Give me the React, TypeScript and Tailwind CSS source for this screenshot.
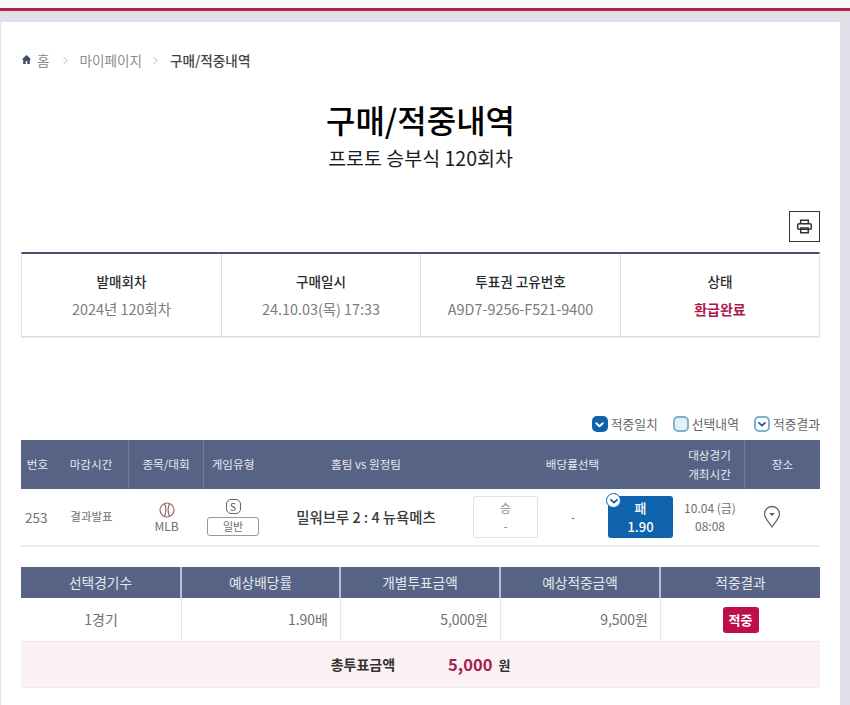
import React from "react";

const Check = ({ className = "" }: { className?: string }) => (
  <svg viewBox="0 0 12 12" className={className} fill="none">
    <path d="M3 4.8 6 7.6 9 4.8" stroke="currentColor" strokeWidth="1.8" strokeLinecap="round" strokeLinejoin="round" />
  </svg>
);

const Info = ({ label, value, strong }: { label: string; value: string; strong?: boolean }) => (
  <div className="flex flex-col items-center border-r border-[#dcdde3] last:border-r-0 pt-[16px]">
    <div className="text-[13.6px] leading-[22px] font-medium text-[#2b2b2b]">{label}</div>
    <div className={strong ? "mt-[6px] text-[14px] leading-[22px] font-bold text-[#ad1a4e]" : "mt-[6px] text-[14.4px] leading-[22px] text-[#7b7b7b]"}>{value}</div>
  </div>
);

const Th = ({ children, sep = false }: { children: React.ReactNode; sep?: boolean }) => (
  <div className={sep ? "flex items-center justify-center border-r border-[#6f7b9c] text-center" : "flex items-center justify-center text-center"}>{children}</div>
);

const Chevron = ({ className = "" }: { className?: string }) => (
  <svg viewBox="0 0 6 10" className={`w-[5px] h-[9px] ${className}`} fill="none">
    <path d="M1 1 5 5 1 9" stroke="#a5a5a5" strokeWidth="1" />
  </svg>
);

export default function App() {
  return (
    <div className="w-[850px] h-[705px] overflow-hidden bg-white text-[#333] font-['Noto_Sans_CJK_KR','Noto_Sans',sans-serif]">
      <div className="h-[8px] bg-[#fafafa]" />
      <div className="h-[3px] bg-[#b5204c]" />
      <div className="h-[694px] bg-[#dfe0e8] pt-[11px] pl-[1px] pr-[10px]">
        <div className="h-[683px] bg-white px-[20px]">
          <nav className="h-[74px] pt-[2px] flex items-center gap-[12px] text-[13.6px] text-[#8d8d8d]">
            <span className="flex items-center gap-[5px]">
              <svg viewBox="0 0 12 12" className="w-[11px] h-[11px]"><path d="M6 1 .8 6h1.6v5h2.7V7.6h1.8V11h2.7V6h1.6z" fill="#3f4b63" /></svg>
              홈
            </span>
            <Chevron className="ml-[1px]" />
            <span>마이페이지</span>
            <Chevron className="-ml-[1px]" />
            <span className="font-medium text-[#444]">구매/적중내역</span>
          </nav>

          <h1 className="mt-[1px] text-center text-[32px] leading-[44px] font-medium text-black">구매/적중내역</h1>
          <p className="mt-[4px] text-center text-[19.5px] leading-[26px] text-[#1c1c1c]">프로토 승부식 120회차</p>

          <div className="mt-[40px] flex justify-end">
            <button className="w-[31px] h-[31px] border border-[#333] flex items-center justify-center">
              <svg viewBox="0 0 18 18" className="w-[17px] h-[17px]" fill="none" stroke="#333" strokeWidth="1.6">
                <path d="M5 6V2.5h8V6" />
                <rect x="1.8" y="6" width="14.4" height="6" rx="1.5" />
                <path d="M5 10.5h8V15.5H5z" />
              </svg>
            </button>
          </div>

          <div className="mt-[10px] h-[85px] grid grid-cols-[200px_199px_200px_1fr] border-t-2 border-[#46536b] border-x border-b border-x-[#e3e4e9] border-b-[#dcdde3] shadow-[0_1px_2px_rgba(0,0,0,0.08)]">
            <Info label="발매회차" value="2024년 120회차" />
            <Info label="구매일시" value="24.10.03(목) 17:33" />
            <Info label="투표권 고유번호" value="A9D7-9256-F521-9400" />
            <Info label="상태" value="환급완료" strong />
          </div>

          <div className="mt-[77px] h-[20px] flex items-center justify-end gap-[15px] text-[12.8px] text-[#666]">
            <span className="flex items-center gap-[3px]">
              <span className="w-[16px] h-[16px] rounded-[5px] bg-[#0f62ac] text-white flex items-center justify-center"><Check className="w-[13px] h-[13px]" /></span>
              적중일치
            </span>
            <span className="flex items-center gap-[3px]">
              <span className="w-[16px] h-[16px] rounded-[5px] border-2 border-[#7fb0cf] bg-[#e6f0f8]" />
              선택내역
            </span>
            <span className="flex items-center gap-[3px]">
              <span className="w-[16px] h-[16px] rounded-[5px] border-2 border-[#7fb0cf] text-[#1b5f9b] flex items-center justify-center"><Check className="w-[12px] h-[12px]" /></span>
              적중결과
            </span>
          </div>

          <div className="mt-[6px] h-[49px] grid grid-cols-[33px_75px_75px_58px_208px_205px_70px_75px] bg-[#566384] text-[11.6px] leading-[19px] text-[#e6e8ef]">
            <Th>번호</Th>
            <Th sep>마감시간</Th>
            <Th sep>종목/대회</Th>
            <Th>게임유형</Th>
            <Th>홈팀 vs 원정팀</Th>
            <Th>배당률선택</Th>
            <Th sep><span>대상경기<br />개최시간</span></Th>
            <Th>장소</Th>
          </div>

          <div className="h-[58px] grid grid-cols-[33px_75px_75px_58px_208px_205px_70px_75px] items-center border-b-2 border-[#eeeef1] text-[#6f6f6f]">
            <div className="pl-[4px] text-[13.5px]">253</div>
            <div className="text-center text-[11.5px]">결과발표</div>
            <div className="flex flex-col items-center text-[12px] leading-[16px] pt-[2px]">
              <svg viewBox="0 0 16 16" className="w-[16px] h-[16px]" fill="none" stroke="#9a6a6a" strokeWidth="1.2">
                <circle cx="8" cy="8" r="7" />
                <path d="M5.5 1.8c1.6 3.6 1.6 8.8 0 12.4M10.5 1.8c-1.6 3.6-1.6 8.8 0 12.4" />
              </svg>
              MLB
            </div>
            <div className="flex flex-col items-center">
              <span className="w-[15px] h-[15px] rounded-[5px] border border-[#666] text-[10px] leading-[13px] text-center text-[#555]">S</span>
              <span className="mt-[3px] w-[52px] h-[19px] rounded-[3px] border border-[#999] text-[11px] leading-[17px] text-center">일반</span>
            </div>
            <div className="text-center text-[14.4px] font-medium text-[#3a3a3a]">밀워브루 2 : 4 뉴욕메츠</div>
            <div className="flex items-center pl-[3px]">
              <div className="w-[65px] h-[42px] border border-[#e3e3e6] rounded-[3px] flex flex-col items-center justify-center text-[12px] leading-[18px] text-[#888]">
                <span>승</span><span>-</span>
              </div>
              <div className="w-[70px] text-center text-[12px]">-</div>
              <div className="relative w-[65px] h-[42px] rounded-[3px] bg-[#0f62ac] flex flex-col items-center justify-center text-[13px] leading-[19px] font-medium text-white">
                <span>패</span><span>1.90</span>
                <span className="absolute -left-[2px] -top-[3px] w-[15px] h-[15px] rounded-full bg-white border border-[#0f62ac] text-[#0f62ac] flex items-center justify-center"><Check className="w-[12px] h-[12px]" /></span>
              </div>
            </div>
            <div className="text-center text-[12px] leading-[18px]">10.04 (금)<br />08:08</div>
            <div className="pl-[18px]">
              <svg viewBox="0 0 18 24" className="w-[18px] h-[24px]" fill="none">
                <path d="M9 22C5 16 1.5 13 1.5 9a7.5 7.5 0 0 1 15 0c0 4-3.5 7-7.5 13z" stroke="#6b6b6b" strokeWidth="1.3" />
                <path d="M6.2 8h5.6L9 11z" fill="#555" />
              </svg>
            </div>
          </div>

          <div className="mt-[20px] h-[31px] grid grid-cols-[161px_159px_160px_160px_1fr] bg-[#566384] text-[13.7px] text-[#e6e8ef]">
            {["선택경기수", "예상배당률", "개별투표금액", "예상적중금액", "적중결과"].map((t, i) => (
              <div key={t} className={i < 4 ? "flex items-center justify-center border-r-2 border-[#b9c0d2]" : "flex items-center justify-center"}>{t}</div>
            ))}
          </div>
          <div className="h-[44px] grid grid-cols-[161px_159px_160px_160px_1fr] text-[14px] text-[#6f6f6f] border-b border-[#e9e9ec]">
            <div className="flex items-center justify-center border-r border-[#e4e5ea]">1경기</div>
            <div className="flex items-center justify-end pr-[12px] border-r border-[#e4e5ea]">1.90배</div>
            <div className="flex items-center justify-end pr-[12px] border-r border-[#e4e5ea]">5,000원</div>
            <div className="flex items-center justify-end pr-[12px] border-r border-[#e4e5ea]">9,500원</div>
            <div className="flex items-center justify-center">
              <span className="w-[36px] h-[26px] rounded-[3px] bg-[#bf0f48] text-white text-[13px] font-bold flex items-center justify-center">적중</span>
            </div>
          </div>
          <div className="h-[46px] flex items-center justify-center bg-[#fbf0f2] border-b border-[#ececef]">
            <span className="text-[14px] font-bold text-[#333]">총투표금액</span>
            <span className="ml-[53px] text-[16.5px] font-bold text-[#a32050]">5,000</span>
            <span className="ml-[6px] text-[13px] font-bold text-[#333]">원</span>
          </div>
        </div>
      </div>
    </div>
  );
}
